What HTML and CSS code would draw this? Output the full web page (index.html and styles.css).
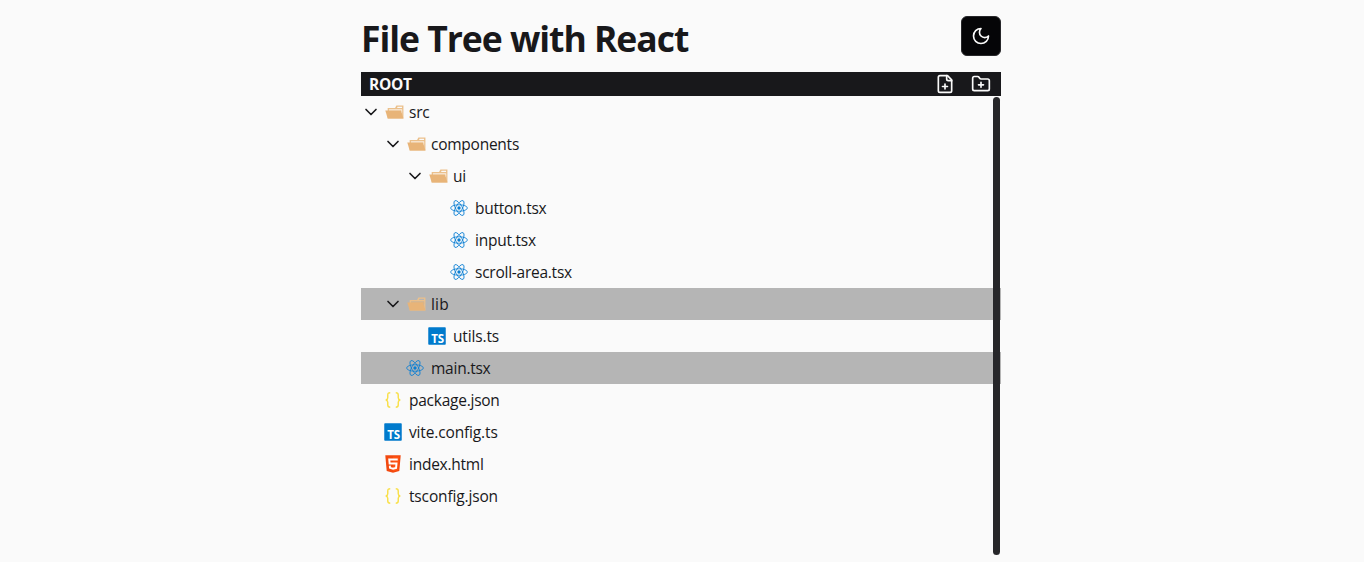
FILE: index.html
```html
<!DOCTYPE html>
<html lang="en">
<head>
<meta charset="utf-8">
<title>File Tree with React</title>
<link rel="stylesheet" href="styles.css">
</head>
<body>
<svg class="defs" aria-hidden="true">
  <symbol id="chevron" viewBox="0 0 24 24"><path d="m6 9 6 6 6-6" fill="none" stroke="#18181b" stroke-width="2" stroke-linecap="round" stroke-linejoin="round"/></symbol>
  <symbol id="folder" viewBox="0 0 32 32">
    <path fill="#ebc08b" fill-rule="evenodd" d="M27.4 5.5h-9.2l-2.1 4.2H4.3v16.8h25.2v-21zm0 18.7H6.6V11.8h20.8zm0-14.5h-8.2l1-2.1h7.1v2.1z"/>
    <path class="pocket" d="M6.6 11.8h20.8v4H6.600z"/>
    <path fill="#e8b478" d="M25.7 13.7H.5l3.8 12.8h25.2z"/>
  </symbol>
  <symbol id="react" viewBox="0 0 32 32">
    <circle cx="16" cy="16" r="2.7" fill="#0a7ed3"/>
    <g fill="none" stroke="#0a7ed3" stroke-width="1.3"><ellipse cx="16" cy="16" rx="13.4" ry="5.2"/><ellipse cx="16" cy="16" rx="13.4" ry="5.2" transform="rotate(60 16 16)"/><ellipse cx="16" cy="16" rx="13.4" ry="5.2" transform="rotate(120 16 16)"/></g>
  </symbol>
  <symbol id="html5" viewBox="0 0 32 32"><path fill="#f2490f" d="M5.9 27.2 3.65 2h24.7L26.1 27.2 16 30z"/><path fill="#ff5314" d="m16 27.9 8.2-2.3L26.100 4H16z"/><path fill="none" stroke="#fff" stroke-width="3.1" d="M23.6 8.7H10l.6 6.4h11l-.7 7.1-4.9 1.4-4.8-1.4-.3-3.5"/></symbol>
  <symbol id="json" viewBox="0 0 32 32"><path fill="none" stroke="#f9e04a" stroke-width="2.3" d="M11.600 4.5C8.400 4.5 7.600 5.5 7.600 8v4.300c0 2.400-.8 3.300-3.200 3.700 2.400.4 3.200 1.300 3.200 3.700V24c0 2.500.8 3.500 4 3.500M20.400 4.500c3.200 0 4 1 4 3.500v4.300c0 2.400.8 3.300 3.200 3.700-2.400.4-3.200 1.300-3.200 3.700V24c0 2.500-.8 3.500-4 3.500"/></symbol>
</svg>
<main class="app">
  <header class="header">
    <h1 class="title">File Tree with React</h1>
    <button class="theme" aria-label="Toggle theme"><svg class="moon" viewBox="0 0 24 24"><path d="M12 3a6 6 0 0 0 9 9 9 9 0 1 1-9-9Z"/></svg></button>
  </header>
  <div class="toolbar">
    <span class="root">ROOT</span>
    <div class="actions">
      <svg class="action" viewBox="0 0 24 24"><path d="M15 2H6a2 2 0 0 0-2 2v16a2 2 0 0 0 2 2h12a2 2 0 0 0 2-2V7Z"/><path d="M14 2v4a2 2 0 0 0 2 2h4M9 15h6M12 18v-6"/></svg>
      <svg class="action" viewBox="0 0 24 24"><path d="M12 10v6M9 13h6"/><path d="M20 20a2 2 0 0 0 2-2V8a2 2 0 0 0-2-2h-7.900a2 2 0 0 1-1.690-.9L9.600 3.900A2 2 0 0 0 7.930 3H4a2 2 0 0 0-2 2v13a2 2 0 0 0 2 2Z"/></svg>
    </div>
  </div>
  <section class="area">
    <div class="tree">
      <div class="row"><svg class="chevron"><use href="#chevron"/></svg><svg class="icon folder"><use href="#folder"/></svg><span class="name">src</span></div>
      <div class="row d1"><svg class="chevron"><use href="#chevron"/></svg><svg class="icon folder"><use href="#folder"/></svg><span class="name">components</span></div>
      <div class="row d2"><svg class="chevron"><use href="#chevron"/></svg><svg class="icon folder"><use href="#folder"/></svg><span class="name">ui</span></div>
      <div class="row d3 file"><svg class="icon"><use href="#react"/></svg><span class="name">button.tsx</span></div>
      <div class="row d3 file"><svg class="icon"><use href="#react"/></svg><span class="name">input.tsx</span></div>
      <div class="row d3 file"><svg class="icon"><use href="#react"/></svg><span class="name">scroll-area.tsx</span></div>
      <div class="row d1 active"><svg class="chevron"><use href="#chevron"/></svg><svg class="icon folder"><use href="#folder"/></svg><span class="name strong">lib</span></div>
      <div class="row d2 file"><svg class="icon" viewBox="0 0 32 32"><rect class="ts-tile" x="2" y="2" width="28" height="28" rx="1.3"/><text x="6.6" y="26.800" class="ts-text">TS</text></svg><span class="name loose">utils.ts</span></div>
      <div class="row d1 file active"><svg class="icon"><use href="#react"/></svg><span class="name">main.tsx</span></div>
      <div class="row file"><svg class="icon"><use href="#json"/></svg><span class="name">package.json</span></div>
      <div class="row file"><svg class="icon" viewBox="0 0 32 32"><rect class="ts-tile" x="2" y="2" width="28" height="28" rx="1.3"/><text x="6.6" y="26.800" class="ts-text">TS</text></svg><span class="name loose">vite.config.ts</span></div>
      <div class="row file"><svg class="icon"><use href="#html5"/></svg><span class="name">index.html</span></div>
      <div class="row file"><svg class="icon"><use href="#json"/></svg><span class="name loose">tsconfig.json</span></div>
    </div>
    <div class="thumb"></div>
  </section>
</main>
</body>
</html>
```

FILE: styles.css
```css
* { box-sizing: border-box; }
body {
  margin: 0;
  height: 562px;
  overflow: hidden;
  background: #fafafa;
  color: #18181b;
  font-family: "Segoe UI", "Open Sans", sans-serif;
}
svg { display: block; flex: none; }
.defs { position: absolute; width: 0; height: 0; }
.app { width: 640px; margin-left: 361px; padding-top: 16px; }
.header { display: flex; justify-content: space-between; height: 56px; }
.title { margin: 2px 0 0; font-size: 35.5px; line-height: 41px; font-weight: 700; letter-spacing: -1.03px; white-space: nowrap; }
.theme {
  display: flex; align-items: center; justify-content: center;
  width: 40px; height: 40px; padding: 0;
  border: 1px solid #27272a; border-radius: 6px; background: #050507;
}
.moon { width: 20px; height: 20px; }
.moon, .action { fill: none; stroke: #fafafa; stroke-width: 2; stroke-linecap: round; stroke-linejoin: round; }
.toolbar {
  display: flex; align-items: center; justify-content: space-between;
  height: 24px; padding: 0 10px 0 8px; background: #18181b; color: #fafafa;
}
.root { font-size: 15.5px; font-weight: 700; line-height: 24px; letter-spacing: -0.3px; }
.actions { display: flex; gap: 16px; }
.action { width: 20px; height: 20px; }
.area { position: relative; height: 460px; }
.row { display: flex; align-items: center; height: 32px; }
.d1 { padding-left: 22px; }
.d2 { padding-left: 44px; }
.d3 { padding-left: 66px; }
.active { background: #b5b5b5; }
.chevron { width: 20px; height: 20px; }
.icon { width: 20px; height: 20px; margin-right: 6px; }
.folder { margin-left: 4px; margin-right: 4px; }
.file .icon { margin-left: 22px; }
.pocket { fill: #f7e6d1; }
.active .folder { --pocket: #d8b58a; }
.pocket { fill: var(--pocket, #f7e6d1); }
.name { font-size: 15.5px; line-height: 32px; letter-spacing: -0.25px; white-space: nowrap; }
.loose { letter-spacing: -0.15px; }
.strong { font-weight: 500; letter-spacing: 0.2px; }
.ts-tile { fill: #007acc; }
.ts-text { font: 700 18.5px "Open Sans", sans-serif; fill: #fff; }
.thumb { position: absolute; top: 1px; right: 1px; width: 7px; height: 458px; border-radius: 4px; background: #27272a; }
```
